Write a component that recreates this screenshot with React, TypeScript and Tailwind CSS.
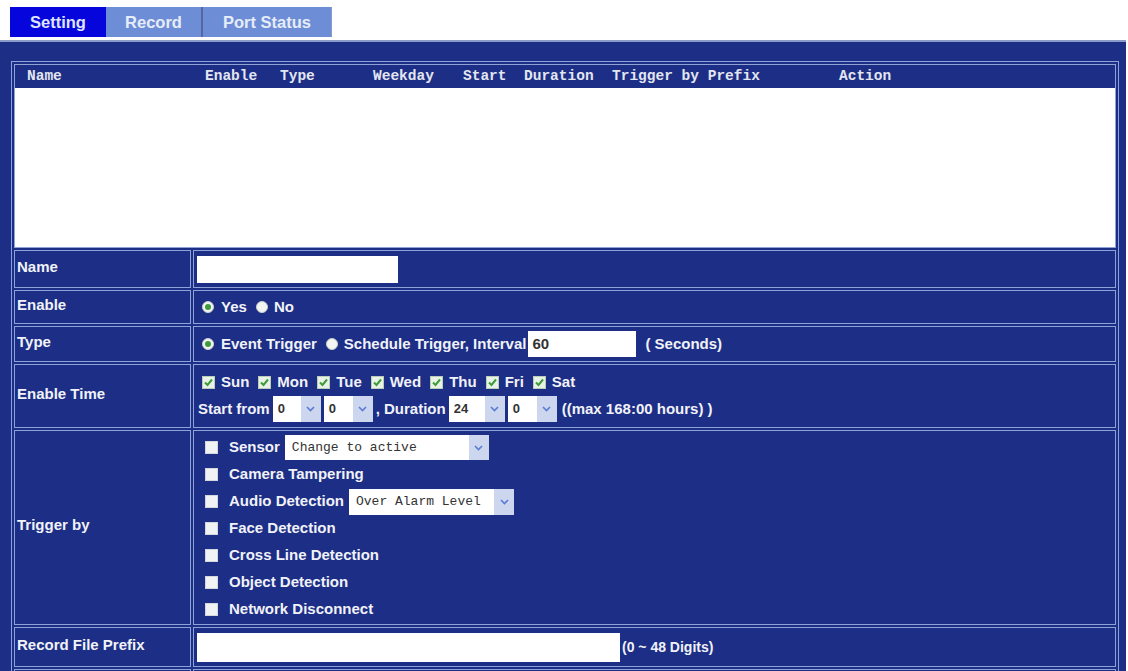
import React from 'react';

const columns = [
  { key: 'name', label: 'Name', w: 'w-[178px]' },
  { key: 'enable', label: 'Enable', w: 'w-[75px]' },
  { key: 'type', label: 'Type', w: 'w-[93px]' },
  { key: 'weekday', label: 'Weekday', w: 'w-[90px]' },
  { key: 'start', label: 'Start', w: 'w-[61px]' },
  { key: 'duration', label: 'Duration', w: 'w-[88px]' },
  { key: 'prefix', label: 'Trigger by Prefix', w: 'w-[227px]' },
  { key: 'action', label: 'Action', w: 'w-[120px]' },
];

const days = ['Sun', 'Mon', 'Tue', 'Wed', 'Thu', 'Fri', 'Sat'];

const Chevron = () => (
  <svg width="9" height="6" viewBox="0 0 9 6">
    <polyline points="1,1 4.5,4.5 8,1" fill="none" stroke="#5a7bd6" strokeWidth="1.6" />
  </svg>
);

const Radio = ({ checked }: { checked?: boolean }) => (
  <svg width="12" height="12" viewBox="0 0 12 12" className="shrink-0">
    <circle cx="6" cy="6" r="5.5" fill="#f3f5f3" stroke="#c9d0c9" />
    {checked && <circle cx="6" cy="6" r="3" fill="#3d9a3d" />}
  </svg>
);

const Check = ({ checked }: { checked?: boolean }) => (
  <svg width="13" height="13" viewBox="0 0 13 13" className="shrink-0">
    <rect x="0.5" y="0.5" width="12" height="12" fill={checked ? '#e8f2e6' : '#f1f2f4'} stroke={checked ? '#b9cdb7' : '#d3d6dc'} />
    {checked && <polyline points="3,6.5 5.5,9 10,3.5" fill="none" stroke="#3f9c3a" strokeWidth="2" />}
  </svg>
);

const Select = ({ value, className, mono }: { value: string; className: string; mono?: boolean }) => (
  <div className={`flex items-stretch bg-white ${className}`}>
    <span
      className={`flex flex-1 items-center text-[#333] ${
        mono ? "pl-[7px] font-['Liberation_Mono',monospace] text-[13px] font-normal" : 'pl-[5px] text-[13px]'
      }`}
    >
      {value}
    </span>
    <span className="flex w-[20px] items-center justify-center bg-[#ccd6ee]">
      <Chevron />
    </span>
  </div>
);

const Row = ({ label, h, children }: { label: string; h: string; children: React.ReactNode }) => (
  <div className={`grid grid-cols-[177px_1fr] gap-[2px] ${h}`}>
    <div className="flex items-center border border-[#8ea2d8] bg-[#1c2e86] pb-[4px] pl-[2px]">{label}</div>
    <div className="border border-[#8ea2d8] bg-[#1c2e86]">{children}</div>
  </div>
);

const TriggerItem = ({ label, children }: { label: string; children?: React.ReactNode }) => (
  <div className="flex h-[27px] items-center">
    <Check />
    <span className="ml-[11px]">{label}</span>
    {children}
  </div>
);

export default function App() {
  return (
    <div className="h-[671px] w-[1128px] overflow-hidden bg-white font-['Liberation_Sans',Arial,sans-serif] text-[15px] font-bold text-[#f1f2f8]">
      {/* tabs */}
      <div className="flex pl-[10px] pt-[7px] text-[16.5px]">
        <div className="flex h-[30px] w-[96px] items-center justify-center bg-[#0606dc] text-[#dfe5ff]">Setting</div>
        <div className="flex h-[30px] w-[97px] items-center justify-center border-r-[2px] border-[#55679e] bg-[#6d8ed6] text-[#e6ecf8]">
          Record
        </div>
        <div className="flex h-[30px] w-[129px] items-center justify-center border-r border-[#8a9bc6] bg-[#6d8ed6] text-[#e6ecf8]">
          Port Status
        </div>
      </div>

      <div className="mr-[2px] mt-[3px] h-[700px] border-t-[2px] border-[#8c9cc9] bg-[#1c2e86] pl-[11px] pr-[7px] pt-[19px]">
        <div className="flex flex-col gap-[2px] border border-[#8ea2d8] p-[2px]">
          {/* schedule list */}
          <div className="border border-[#8ea2d8]">
            <div className="flex h-[23px] items-center bg-[#1c2e86] pl-[12px] font-['Liberation_Mono',monospace] text-[14.5px] text-[#e3e6f0]">
              {columns.map((c) => (
                <span key={c.key} className={c.w}>
                  {c.label}
                </span>
              ))}
            </div>
            <div className="h-[159px] bg-white" />
          </div>

          <Row label="Name" h="h-[38px]">
            <div className="flex h-full items-center pl-[3px]">
              <div className="h-[27px] w-[201px] bg-white" />
            </div>
          </Row>

          <Row label="Enable" h="h-[34px]">
            <div className="flex h-full items-center pl-[8px]">
              <Radio checked />
              <span className="ml-[7px]">Yes</span>
              <span className="ml-[9px]">
                <Radio />
              </span>
              <span className="ml-[6px]">No</span>
            </div>
          </Row>

          <Row label="Type" h="h-[36px]">
            <div className="flex h-full items-center pl-[8px]">
              <Radio checked />
              <span className="ml-[7px]">Event Trigger</span>
              <span className="ml-[9px]">
                <Radio />
              </span>
              <span className="ml-[6px]">Schedule Trigger, Interval</span>
              <div className="ml-[2px] flex h-[26px] w-[108px] items-center bg-white pl-[4px] text-[#333]">60</div>
              <span className="ml-[9px]">( Seconds)</span>
            </div>
          </Row>

          <Row label="Enable Time" h="h-[64px]">
            <div className="flex h-full flex-col gap-[3px] pl-[8px] pt-[6px]">
              <div className="flex h-[22px] items-center gap-[9px]">
                {days.map((d) => (
                  <span key={d} className="flex items-center gap-[6px]">
                    <Check checked />
                    {d}
                  </span>
                ))}
              </div>
              <div className="-ml-[4px] flex h-[26px] items-center">
                <span>Start from</span>
                <Select value="0" className="ml-[3px] h-[26px] w-[48px]" />
                <Select value="0" className="ml-[3px] h-[26px] w-[49px]" />
                <span className="ml-[3px]">, Duration</span>
                <Select value="24" className="ml-[3px] h-[26px] w-[56px]" />
                <Select value="0" className="ml-[3px] h-[26px] w-[49px]" />
                <span className="ml-[5px]">((max 168:00 hours) )</span>
              </div>
            </div>
          </Row>

          <Row label="Trigger by" h="h-[195px]">
            <div className="flex flex-col pl-[11px] pt-[3px]">
              <TriggerItem label="Sensor">
                <Select value="Change to active" mono className="ml-[5px] h-[25px] w-[204px]" />
              </TriggerItem>
              <TriggerItem label="Camera Tampering" />
              <TriggerItem label="Audio Detection">
                <Select value="Over Alarm Level" mono className="ml-[5px] h-[26px] w-[165px]" />
              </TriggerItem>
              <TriggerItem label="Face Detection" />
              <TriggerItem label="Cross Line Detection" />
              <TriggerItem label="Object Detection" />
              <TriggerItem label="Network Disconnect" />
            </div>
          </Row>

          <Row label="Record File Prefix" h="h-[40px]">
            <div className="flex h-full items-center pl-[3px]">
              <div className="h-[29px] w-[423px] bg-white" />
              <span className="ml-[2px] text-[14px]">(0 ~ 48 Digits)</span>
            </div>
          </Row>

          <Row label="" h="h-[38px]">
            <div />
          </Row>
        </div>
      </div>
    </div>
  );
}
